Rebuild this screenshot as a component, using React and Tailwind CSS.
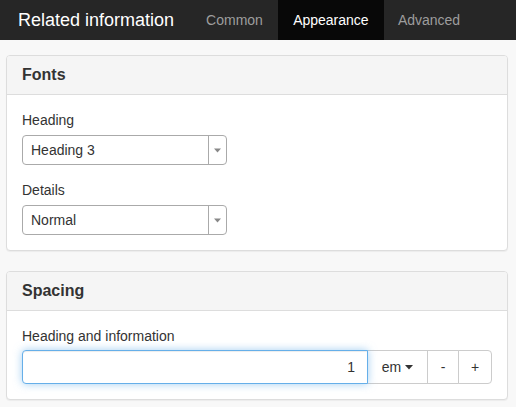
import React from "react";

function Select({ value }) {
  return (
    <div className="flex h-[30px] w-[205px] items-stretch rounded-[4px] border border-[#aaaaaa] bg-white">
      <div className="flex flex-1 items-center pl-[8px] text-[14px] text-[#333]">{value}</div>
      <div className="flex w-[18px] items-center justify-center border-l border-[#aaaaaa]">
        <svg width="7" height="5" viewBox="0 0 7 5"><path d="M0 0.5 L7 0.5 L3.5 4.5 Z" fill="#888" /></svg>
      </div>
    </div>
  );
}

function Panel({ title, children }) {
  return (
    <div className="overflow-hidden rounded-[4px] border border-[#dddddd] bg-white shadow-[0_1px_1px_rgba(0,0,0,0.05)]">
      <div className="flex h-[39px] items-center border-b border-[#dddddd] bg-[#f5f5f5] px-[15px] text-[16px] font-bold text-[#333]">
        {title}
      </div>
      {children}
    </div>
  );
}

export default function App() {
  return (
    <div className="min-h-[407px] bg-[#f8f8f8] font-['Liberation_Sans',Arial,sans-serif] text-[#333]">
      <div className="flex h-[40px] items-stretch bg-[#262626]">
        <div className="flex items-center pl-[18px] pr-[17px] text-[18px] text-white">Related information</div>
        <div className="flex items-center px-[15px] text-[14px] text-[#9d9d9d]">Common</div>
        <div className="flex w-[106px] items-center justify-center bg-[#080808] text-[14px] text-white">Appearance</div>
        <div className="flex items-center px-[14px] text-[14px] text-[#9d9d9d]">Advanced</div>
      </div>
      <div className="flex flex-col gap-[20px] pl-[6px] pr-[8px] pt-[15px]">
        <Panel title="Fonts">
          <div className="px-[15px] pb-[15px] pt-[15px]">
            <div className="mb-[5px] text-[14px] leading-[20px]">Heading</div>
            <Select value="Heading 3" />
            <div className="mb-[5px] mt-[15px] text-[14px] leading-[20px]">Details</div>
            <Select value="Normal" />
          </div>
        </Panel>
        <Panel title="Spacing">
          <div className="px-[15px] pb-[15px] pt-[15px]">
            <div className="mb-[4px] text-[14px] leading-[20px]">Heading and information</div>
            <div className="flex h-[34px] w-[470px]">
              <div className="relative z-10 flex flex-1 items-center justify-end rounded-l-[4px] border border-[#66afe9] bg-white pr-[12px] text-[14px] shadow-[inset_0_1px_1px_rgba(0,0,0,0.075),0_0_8px_rgba(102,175,233,0.6)]">
                1
              </div>
              <div className="-ml-px flex w-[61px] items-center justify-center gap-[4px] border border-[#cccccc] bg-white text-[14px]">
                em
                <svg width="8" height="5" viewBox="0 0 8 5"><path d="M0 0 L8 0 L4 4.5 Z" fill="#333" /></svg>
              </div>
              <div className="-ml-px flex w-[32px] items-center justify-center border border-[#cccccc] bg-white text-[14px]">-</div>
              <div className="-ml-px flex w-[34px] items-center justify-center rounded-r-[4px] border border-[#cccccc] bg-white text-[14px]">+</div>
            </div>
          </div>
        </Panel>
      </div>
    </div>
  );
}
